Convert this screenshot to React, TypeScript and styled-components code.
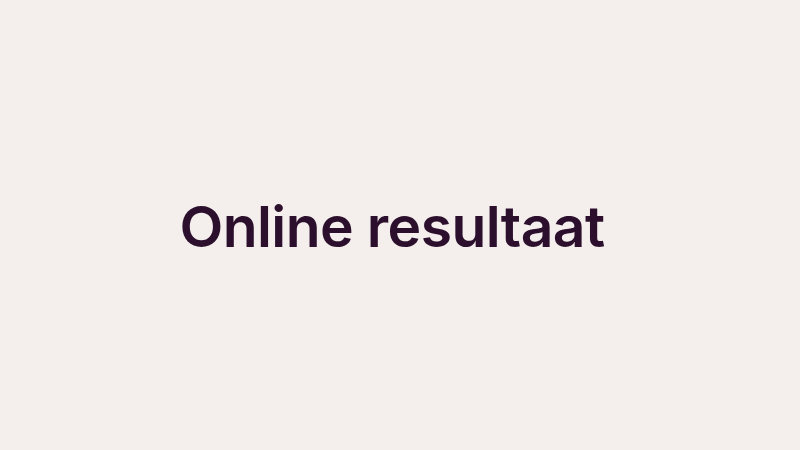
import React from 'react'
import styled, { createGlobalStyle } from 'styled-components'

const GlobalStyle = createGlobalStyle`
  html, body {
    margin: 0;
    padding: 0;
    background: #f4efed;
  }
`

const Stage = styled.div`
  box-sizing: border-box;
  width: 800px;
  height: 450px;
  padding: 0 16px 0 0;
  display: flex;
  align-items: center;
  justify-content: center;
  background: #f4efed;
`

const Title = styled.h1`
  margin: 0 0 -3px;
  font-family: Inter, 'Noto Sans', sans-serif;
  font-weight: 600;
  font-size: 57px;
  letter-spacing: -0.6px;
  color: #2b0f2c;
  line-height: 1;
`

const App: React.FC = () => (
  <>
    <GlobalStyle />
    <Stage>
      <Title>Online resultaat</Title>
    </Stage>
  </>
)

export default App
